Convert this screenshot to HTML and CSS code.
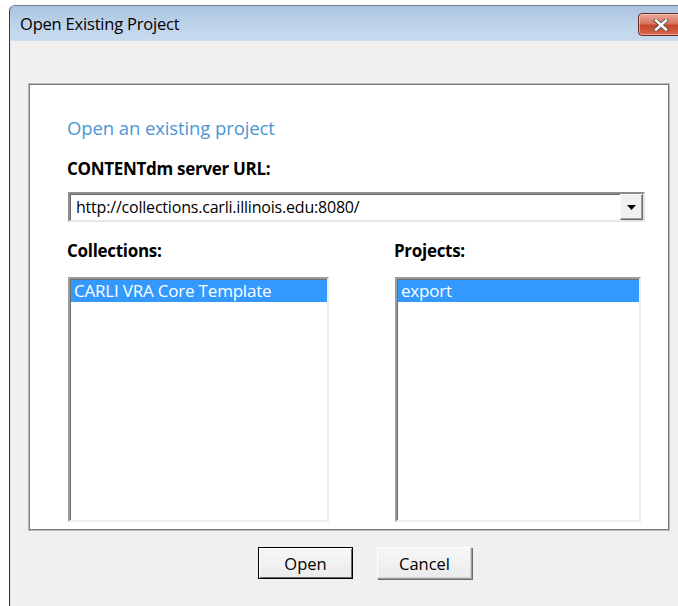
FILE: index.html
```html
<!DOCTYPE html>
<html lang="en">
<head>
<meta charset="utf-8">
<title>Open Existing Project</title>
<link rel="stylesheet" href="styles.css">
</head>
<body>
<div class="window">
  <div class="titlebar">
    <span class="title">Open Existing Project</span>
    <button class="close" aria-label="Close">
      <svg width="16" height="12" viewBox="0 0 16 12">
        <path d="M3 1.5 L13 10.5 M13 1.5 L3 10.5" stroke="#555" stroke-width="4.2" stroke-linecap="square"/>
        <path d="M3 1.5 L13 10.5 M13 1.5 L3 10.5" stroke="#fff" stroke-width="2.4" stroke-linecap="square"/>
      </svg>
    </button>
  </div>
  <div class="client">
    <div class="panel">
      <div class="heading">Open an existing project</div>
      <div class="label">CONTENTdm server URL:</div>
      <div class="combo">
        <span class="combo-text">http://collections.carli.illinois.edu:8080/</span>
        <span class="combo-btn">
          <svg width="9" height="5" viewBox="0 0 9 5"><path d="M0 0 H9 L4.5 5 Z" fill="#000"/></svg>
        </span>
      </div>
      <div class="columns">
        <div class="col col-left">
          <div class="label">Collections:</div>
          <div class="listbox list-left">
            <div class="item selected">CARLI VRA Core Template</div>
          </div>
        </div>
        <div class="col col-right">
          <div class="label">Projects:</div>
          <div class="listbox list-right">
            <div class="item selected">export</div>
          </div>
        </div>
      </div>
    </div>
    <div class="buttons">
      <button class="btn btn-default">Open</button>
      <button class="btn">Cancel</button>
    </div>
  </div>
</div>
</body>
</html>
```

FILE: styles.css
```css
html, body {
  margin: 0;
  padding: 0;
  background: #ffffff;
  overflow: hidden;
}

body {
  width: 678px;
  height: 606px;
  font-family: "Open Sans", "Noto Sans", sans-serif;
}

.window {
  margin: 5px 0 0 9px;
  width: 690px;
  height: 620px;
  border-left: 1px solid #3b3b3b;
  border-top: 1px solid #6e7f93;
  border-top-left-radius: 6px;
  background: #f0f0f0;
  overflow: hidden;
  box-shadow: inset 1px 0 0 #d6e2ef;
}

.titlebar {
  height: 34px;
  display: flex;
  align-items: flex-start;
  background: linear-gradient(#aac3df, #bed3ea 55%, #c6daef);
  border-bottom: 1px solid #d2dfed;
  padding-left: 10px;
}

.title {
  font-size: 16.5px;
  line-height: 22px;
  margin-top: 7px;
  color: #000;
  letter-spacing: -0.2px;
}

.close {
  margin: 7px 16px 0 auto;
  width: 46px;
  height: 23px;
  padding: 0;
  border: 1px solid #6b2a22;
  border-radius: 4px;
  background: linear-gradient(#e9a99c, #d9755f 45%, #c7452b 55%, #d46a4e);
  box-shadow: inset 0 0 0 1px rgba(255, 220, 210, 0.55);
  display: flex;
  align-items: center;
  justify-content: center;
}

.client {
  padding: 42px 0 0 18px;
}

.panel {
  box-sizing: border-box;
  width: 642px;
  height: 448px;
  background: #ffffff;
  border: 1px solid #b9b9b9;
  box-shadow: inset 0 0 0 1px #7c7c7c;
  padding: 33px 0 0 38px;
}

.heading {
  font-size: 18.5px;
  line-height: 22px;
  color: #4a97d5;
  letter-spacing: -0.1px;
}

.label {
  font-size: 17px;
  font-weight: 700;
  line-height: 22px;
  color: #000;
  letter-spacing: -0.3px;
}

.heading + .label {
  margin-top: 19px;
}

.combo {
  box-sizing: border-box;
  margin: 12px 0 0 1px;
  width: 577px;
  height: 30px;
  display: flex;
  align-items: center;
  border-style: solid;
  border-width: 2px;
  border-color: #8e8e8e #e6e6e6 #e6e6e6 #8e8e8e;
  box-shadow: inset 1px 1px 0 #6a6a6a;
  background: #fff;
}

.combo-text {
  font-size: 16px;
  color: #000;
  padding-left: 6px;
  flex: 1;
  letter-spacing: -0.2px;
}

.combo-btn {
  box-sizing: border-box;
  width: 23px;
  height: 26px;
  display: flex;
  align-items: center;
  justify-content: center;
  background: #f0f0f0;
  border-style: solid;
  border-width: 1px;
  border-color: #f8f8f8 #6a6a6a #6a6a6a #f8f8f8;
  box-shadow: inset -1px -1px 0 #a0a0a0;
}

.columns {
  display: flex;
  margin-top: 18px;
}

.col-left {
  width: 327px;
}

.col-right {
  width: 248px;
}

.listbox {
  box-sizing: border-box;
  margin-top: 15px;
  height: 245px;
  background: #fff;
  border-style: solid;
  border-width: 2px;
  border-color: #9c9c9c #ececec #ececec #9c9c9c;
  box-shadow: inset 1px 1px 0 #6e6e6e;
  padding: 1px 0 0 1px;
}

.list-left {
  margin-left: 1px;
  width: 261px;
}

.list-right {
  margin-left: 1px;
  width: 246px;
}

.item {
  font-size: 17px;
  line-height: 22px;
  padding-left: 3px;
  letter-spacing: -0.2px;
}

.item.selected {
  background: #3399ff;
  color: #fff;
}

.buttons {
  display: flex;
  gap: 24px;
  margin: 16px 0 0 230px;
}

.btn {
  box-sizing: border-box;
  width: 95px;
  height: 32px;
  padding: 0;
  font-family: "Open Sans", "Noto Sans", sans-serif;
  font-size: 16.5px;
  color: #000;
  background: linear-gradient(#f7f7f7, #ebebeb);
  border-style: solid;
  border-width: 1px;
  border-color: #ffffff #a0a0a0 #a0a0a0 #ffffff;
  box-shadow: 1px 1px 0 #6a6a6a, inset -1px -1px 0 #d4d4d4;
}

.btn-default {
  border: 1px solid #000;
  box-shadow: inset 1px 1px 0 #fff, inset -1px -1px 0 #6a6a6a;
}
```
